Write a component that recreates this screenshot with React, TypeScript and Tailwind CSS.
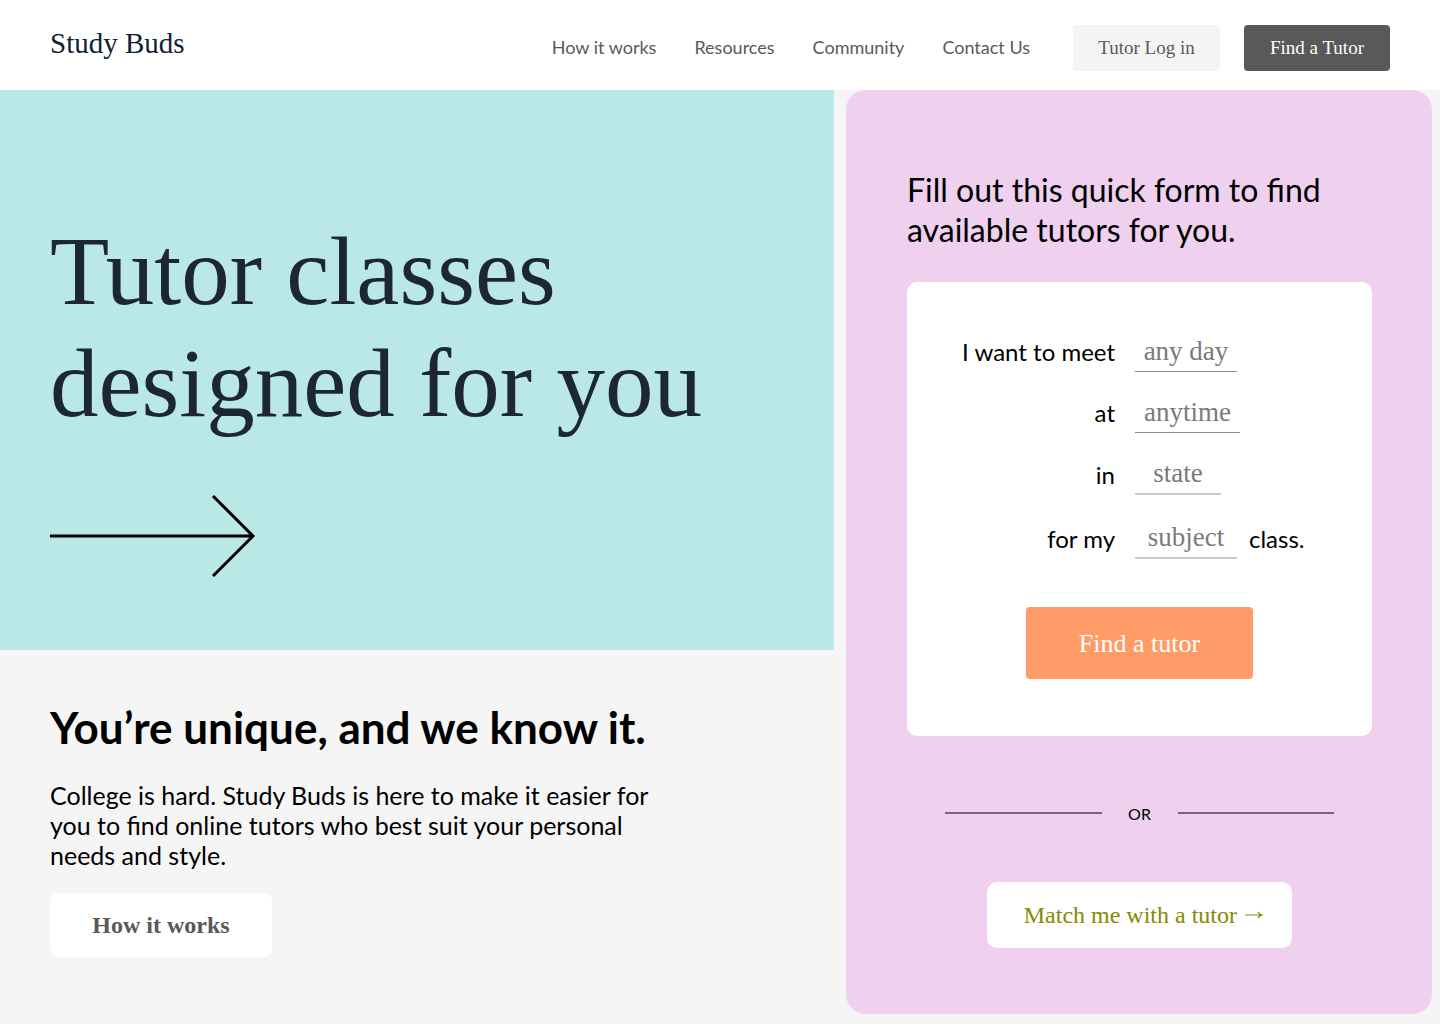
import React from "react";

const serif = "font-['Liberation_Serif',serif]";

const links = ["How it works", "Resources", "Community", "Contact Us"];

const thin = "h-[41px] border-b border-[#8c8c8c]";
const soft = "h-[42px] border-b-2 border-[#c8c8c8]";

const fields = [
  { id: "day", label: "I want to meet", hint: "any day", box: `w-[102px] ${thin}`, after: "" },
  { id: "time", label: "at", hint: "anytime", box: `w-[105px] ${thin}`, after: "" },
  { id: "state", label: "in", hint: "state", box: `w-[86px] ${soft}`, after: "" },
  { id: "subject", label: "for my", hint: "subject", box: `w-[102px] ${soft}`, after: "class." },
];

function Header() {
  return (
    <header className="flex h-[90px] items-center justify-between bg-white px-[50px]">
      <a href="#" className={`${serif} pb-1 text-[29px] leading-9 text-[#0f2233]`}>
        Study Buds
      </a>
      <div className="flex items-center pt-1.5">
        <nav className="mr-[43px] flex gap-[38px] pb-0.5 text-[18px] leading-6 text-[#595959]">
          {links.map((l) => (
            <a key={l} href="#">
              {l}
            </a>
          ))}
        </nav>
        <div className={`${serif} flex gap-6 text-[19px]`}>
          <button type="button" className="h-[46px] min-w-[147px] rounded bg-[#f4f4f4] px-6 text-[#595959]">
            Tutor Log in
          </button>
          <button type="button" className="h-[46px] min-w-[146px] rounded bg-[#595959] px-6 text-white">
            Find a Tutor
          </button>
        </div>
      </div>
    </header>
  );
}

function Hero() {
  return (
    <section className="bg-[#bae8e6] px-[50px] pt-[126px] pb-[73px]">
      <h1 className={`${serif} text-[97px] leading-[112px] text-[#1c2636]`}>
        Tutor classes
        <br />
        designed for you
      </h1>
      <svg
        className="mt-[54px] block"
        width="206"
        height="83"
        viewBox="0 0 206 83"
        fill="none"
        stroke="#000"
        strokeWidth="3"
        aria-hidden="true"
      >
        <path d="M0 42H203M163 2L203 42L163 82" />
      </svg>
    </section>
  );
}

function About() {
  return (
    <section className="px-[50px] pt-[52px]">
      <h2 className="text-[44px] leading-[50px] font-bold">You’re unique, and we know it.</h2>
      <p className="mt-7 max-w-[620px] text-[25px] leading-[30px]">
        College is hard. Study Buds is here to make it easier for you to find online tutors who best
        suit your personal needs and style.
      </p>
      <button
        type="button"
        className={`${serif} mt-[23px] h-16 w-[222px] rounded-lg bg-white text-[24px] font-bold text-[#595959]`}
      >
        How it works
      </button>
    </section>
  );
}

function FinderForm() {
  return (
    <form
      className="mt-8 rounded-[10px] bg-white pt-[49px] pb-[57px]"
      onSubmit={(e) => e.preventDefault()}
    >
      <div className="flex flex-col gap-5">
        {fields.map((f) => (
          <div key={f.id} className="flex items-end last:mt-0.5">
            <label htmlFor={f.id} className="w-[208px] pb-1 text-right text-[24px] leading-8">
              {f.label}
            </label>
            <input
              id={f.id}
              type="text"
              placeholder={f.hint}
              className={`${serif} ${f.box} ml-5 bg-transparent text-center text-[27px] text-[#6b6b6b] outline-none placeholder:text-[#7a7a7a]`}
            />
            {f.after && <span className="ml-3 pb-1 text-[24px] leading-8">{f.after}</span>}
          </div>
        ))}
      </div>
      <div className="mt-12 flex justify-center">
        <button
          type="submit"
          className={`${serif} h-[72px] w-[227px] rounded bg-[#ff9b66] text-[26px] text-white`}
        >
          Find a tutor
        </button>
      </div>
    </form>
  );
}

function FinderPanel() {
  return (
    <aside className="rounded-[20px] bg-[#efd0ee] pt-20 pr-[60px] pb-[66px] pl-[61px]">
      <h2 className="text-[32px] leading-10">Fill out this quick form to find available tutors for you.</h2>
      <FinderForm />
      <div className="mt-16 flex items-center px-[38px]">
        <span className="h-0.5 flex-1 bg-[#776877]" />
        <span className="w-[76px] pt-0.5 text-center text-[16px] leading-6">OR</span>
        <span className="h-0.5 flex-1 bg-[#776877]" />
      </div>
      <div className="mt-14 flex justify-center">
        <button
          type="button"
          className={`${serif} flex h-[66px] w-[305px] items-center justify-end gap-2 rounded-[10px] bg-white pr-[29px] text-[24px] text-[#858a00]`}
        >
          Match me with a tutor
          <svg
            width="18"
            height="10"
            viewBox="0 0 18 10"
            fill="none"
            stroke="currentColor"
            strokeWidth="1.2"
            aria-hidden="true"
          >
            <path d="M0 5H17M13 2Q14 4 17 5Q14 6 13 8" />
          </svg>
        </button>
      </div>
    </aside>
  );
}

export default function App() {
  return (
    <div className="min-h-screen bg-[#f5f5f5] font-['Lato',sans-serif] text-black">
      <Header />
      <main className="grid grid-cols-[834fr_606fr]">
        <div>
          <Hero />
          <About />
        </div>
        <div className="pr-2 pb-2.5 pl-3">
          <FinderPanel />
        </div>
      </main>
    </div>
  );
}
